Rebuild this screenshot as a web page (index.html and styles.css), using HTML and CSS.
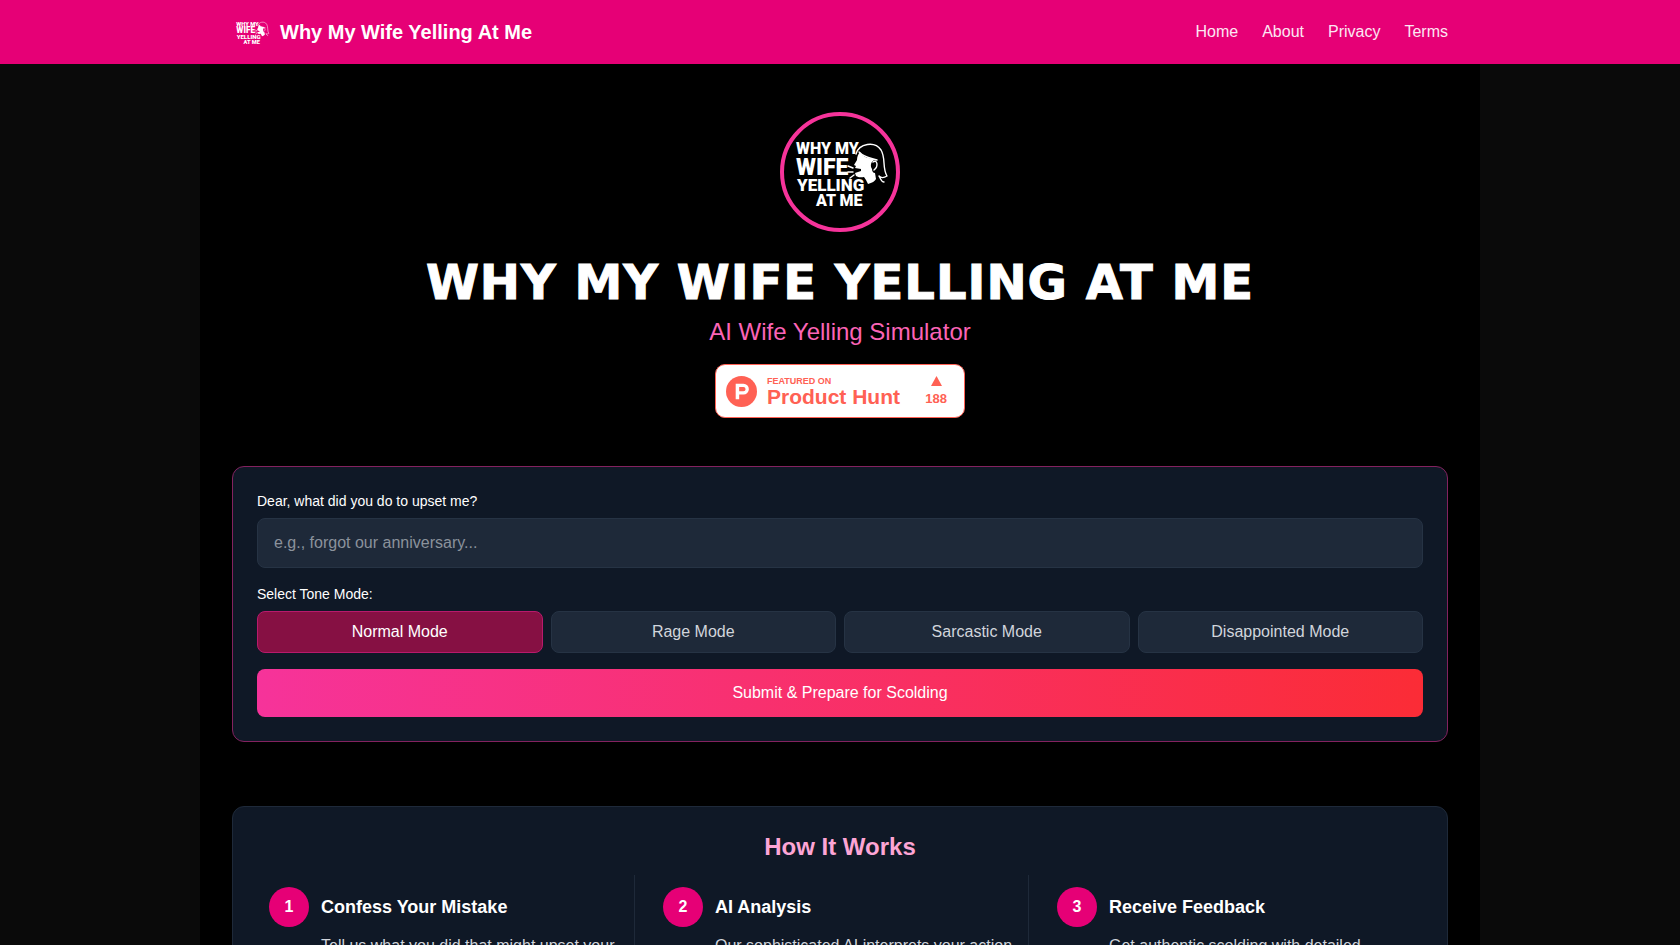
FILE: index.html
```html
<!DOCTYPE html>
<html lang="en">
<head>
<meta charset="utf-8">
<meta name="viewport" content="width=device-width, initial-scale=1">
<title>Why My Wife Yelling At Me</title>
<link rel="stylesheet" href="styles.css">
</head>
<body>
<header class="site-header">
  <div class="header-inner">
    <a class="brand" href="#">
      <svg class="logo brand-logo" viewBox="0 0 112 112" aria-hidden="true">
        <text x="12" y="38" font-size="16">WHY MY</text>
        <text x="12" y="59" font-size="23">WIFE</text>
        <text x="13" y="75" font-size="17">YELLING</text>
        <text x="32" y="90" font-size="16">AT ME</text>
        <path class="logo-face" d="M76 36 C74 38 73 41 73 44 L70 49 L72 50 L71 52 L77 53 L77 55 L71 57 L72 60 C75 62 78 61 80 61 L82 64 L84 68 C88 67 91 65 92 63 L91 57 C89 57 88 55 88 53 C86 50 87 46 89 45 L91 43 C85 43 79 41 76 36 Z"/>
        <path class="logo-line" d="M72 38 C75 27 91 25 97 34 C102 42 98 52 103 60 C100 62 97 62 95 60 C97 63 97 66 100 66"/>
        <path class="logo-line" d="M75 36 C81 42 87 42 93 44 M89 46 C93 43 95 50 90 54"/>
        <path class="logo-line" d="M64 50 L69 52 M64 56 H69 M66 62 L70 59"/>
      </svg>
      <span>Why My Wife Yelling At Me</span>
    </a>
    <nav class="nav">
      <a href="#">Home</a>
      <a href="#">About</a>
      <a href="#">Privacy</a>
      <a href="#">Terms</a>
    </nav>
  </div>
</header>
<main class="main">
  <section class="hero">
    <div class="hero-logo">
      <svg class="logo" viewBox="0 0 112 112" aria-hidden="true">
        <text x="12" y="38" font-size="16">WHY MY</text>
        <text x="12" y="59" font-size="23">WIFE</text>
        <text x="13" y="75" font-size="17">YELLING</text>
        <text x="32" y="90" font-size="16">AT ME</text>
        <path class="logo-face" d="M76 36 C74 38 73 41 73 44 L70 49 L72 50 L71 52 L77 53 L77 55 L71 57 L72 60 C75 62 78 61 80 61 L82 64 L84 68 C88 67 91 65 92 63 L91 57 C89 57 88 55 88 53 C86 50 87 46 89 45 L91 43 C85 43 79 41 76 36 Z"/>
        <path class="logo-line" d="M72 38 C75 27 91 25 97 34 C102 42 98 52 103 60 C100 62 97 62 95 60 C97 63 97 66 100 66"/>
        <path class="logo-line" d="M75 36 C81 42 87 42 93 44 M89 46 C93 43 95 50 90 54"/>
        <path class="logo-line" d="M64 50 L69 52 M64 56 H69 M66 62 L70 59"/>
      </svg>
    </div>
    <h1>Why My Wife Yelling At Me</h1>
    <p class="subtitle">AI Wife Yelling Simulator</p>
    <a class="badge" href="#">
      <svg class="badge-icon" viewBox="0 0 32 32" aria-hidden="true">
        <circle cx="16" cy="16" r="16" fill="#ff6154"/>
        <path fill="#fff" fill-rule="evenodd" d="M10 8 H18 A5.6 5.6 0 0 1 18 19.2 H13.6 V24 H10 Z M13.6 11.4 V15.8 H18 A2.2 2.2 0 0 0 18 11.4 Z"/>
      </svg>
      <span class="badge-text">
        <span class="badge-small">FEATURED ON</span>
        <span class="badge-name">Product Hunt</span>
      </span>
      <span class="badge-votes">
        <svg viewBox="0 0 11 10" aria-hidden="true"><path d="M5.500 0 L11 10 H0 Z" fill="#ff6154"/></svg>
        <span>188</span>
      </span>
    </a>
  </section>

  <form class="card confess">
    <label class="label" for="mistake">Dear, what did you do to upset me?</label>
    <input class="field" id="mistake" type="text" placeholder="e.g., forgot our anniversary...">
    <div class="label" id="tone-label">Select Tone Mode:</div>
    <div class="modes" role="group" aria-labelledby="tone-label">
      <button class="mode selected" type="button" aria-pressed="true">Normal Mode</button>
      <button class="mode" type="button" aria-pressed="false">Rage Mode</button>
      <button class="mode" type="button" aria-pressed="false">Sarcastic Mode</button>
      <button class="mode" type="button" aria-pressed="false">Disappointed Mode</button>
    </div>
    <button class="submit" type="submit">Submit &amp; Prepare for Scolding</button>
  </form>

  <section class="card how">
    <h2>How It Works</h2>
    <div class="steps">
      <article class="step">
        <span class="step-number">1</span>
        <h3>Confess Your Mistake</h3>
        <p>Tell us what you did that might upset your</p>
      </article>
      <article class="step">
        <span class="step-number">2</span>
        <h3>AI Analysis</h3>
        <p>Our sophisticated AI interprets your action</p>
      </article>
      <article class="step">
        <span class="step-number">3</span>
        <h3>Receive Feedback</h3>
        <p>Get authentic scolding with detailed</p>
      </article>
    </div>
  </section>
</main>
</body>
</html>
```
FILE: styles.css
```css
* {
  box-sizing: border-box;
  margin: 0;
}

body {
  background: #0a0a0a;
  color: #fff;
  font: 16px/24px "Liberation Sans", Arial, sans-serif;
}

a {
  color: inherit;
  text-decoration: none;
}

button,
input {
  font: inherit;
  color: inherit;
}

.logo {
  fill: #fff;
  font-family: Roboto, sans-serif;
  font-weight: 900;
}

.logo-line {
  fill: none;
  stroke: #fff;
  stroke-width: 1.4;
  stroke-linecap: round;
  stroke-linejoin: round;
}

.site-header {
  background: #e60076;
}

.header-inner {
  display: flex;
  align-items: center;
  justify-content: space-between;
  max-width: 1280px;
  min-height: 64px;
  margin: 0 auto;
  padding: 0 32px;
}

.brand {
  display: flex;
  align-items: center;
  gap: 8px;
  font-size: 20px;
  font-weight: 700;
}

.brand-logo {
  width: 40px;
  height: 40px;
}

.nav {
  display: flex;
  gap: 24px;
  color: #fce7f3;
}

.main {
  max-width: 1280px;
  margin: 0 auto;
  padding: 48px 32px;
  background: #000;
}

.hero {
  display: flex;
  flex-direction: column;
  align-items: center;
  margin-bottom: 48px;
  text-align: center;
}

.hero-logo {
  width: 120px;
  height: 120px;
  margin-bottom: 24px;
  border: 4px solid #f6339a;
  border-radius: 50%;
}

.hero-logo svg {
  display: block;
  width: 100%;
  height: 100%;
}

.hero h1 {
  margin-bottom: 8px;
  font-family: "Arial Black", "DejaVu Sans", sans-serif;
  font-size: 48px;
  line-height: 52px;
  font-weight: 900;
  letter-spacing: 1px;
  text-transform: uppercase;
  -webkit-text-stroke: 1px #fff;
}

.subtitle {
  margin-bottom: 16px;
  color: #fb64b6;
  font-size: 24px;
  line-height: 32px;
}

.badge {
  display: flex;
  align-items: center;
  width: 250px;
  height: 54px;
  padding: 0 17px 0 10px;
  border: 1px solid #ff6154;
  border-radius: 10px;
  background: #fff;
  color: #ff6154;
  font-weight: 700;
  text-align: left;
}

.badge-icon {
  width: 31px;
  height: 31px;
  margin-right: 10px;
}

.badge-text {
  display: flex;
  flex-direction: column;
  flex: 1;
}

.badge-small {
  font-size: 9px;
  line-height: 12px;
}

.badge-name {
  font-size: 21px;
  line-height: 20px;
}

.badge-votes {
  display: flex;
  flex-direction: column;
  align-items: center;
  gap: 5px;
  font-size: 13px;
  line-height: 16px;
}

.badge-votes svg {
  width: 11px;
  height: 10px;
}

.card {
  padding: 24px;
  border: 1px solid #1e2939;
  border-radius: 12px;
  background: #0f1826;
}

.confess {
  display: flex;
  flex-direction: column;
  margin-bottom: 64px;
  border-color: #83225f;
}

.label {
  margin-bottom: 7px;
  font-size: 14px;
  line-height: 20px;
}

.field {
  width: 100%;
  height: 50px;
  margin-bottom: 16px;
  padding: 0 16px;
  border: 1px solid #263344;
  border-radius: 8px;
  background: #1e2939;
}

.field::placeholder {
  color: #8b929c;
  opacity: 1;
}

.modes {
  display: grid;
  grid-template-columns: repeat(4, 1fr);
  gap: 8px;
  margin-bottom: 16px;
}

.mode {
  padding: 8px;
  border: 1px solid #263344;
  border-radius: 8px;
  background: #1e2939;
  color: #d1d5dc;
}

.mode.selected {
  border-color: #b81a6c;
  background: #861043;
  color: #fff;
}

.submit {
  padding: 12px;
  border: 0;
  border-radius: 8px;
  background: linear-gradient(to right, #f6339a, #fb2c36);
}

.how h2 {
  margin-bottom: 12px;
  color: #fda5d5;
  font-size: 24px;
  line-height: 32px;
  text-align: center;
}

.steps {
  display: grid;
  grid-template-columns: repeat(3, 1fr);
  gap: 16px;
}

.step {
  display: grid;
  grid-template-columns: 40px 1fr;
  align-items: center;
  gap: 7px 12px;
  padding: 12px;
  border-right: 1px solid #1e2939;
}

.step:last-child {
  border-right: 0;
}

.step-number {
  display: grid;
  place-items: center;
  height: 40px;
  border-radius: 50%;
  background: #e60076;
  font-weight: 700;
}

.step h3 {
  font-size: 18px;
  line-height: 28px;
}

.step p {
  grid-column: 2;
  color: #d1d5dc;
}
```
